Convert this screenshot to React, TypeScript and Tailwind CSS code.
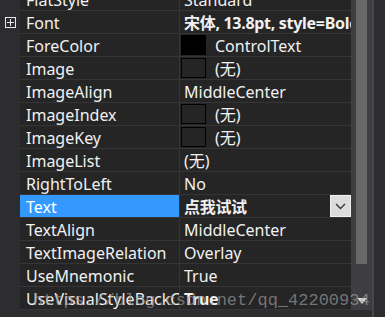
const rows: { name: string; value: string; bold?: boolean; swatch?: "black" | "empty"; expand?: boolean; selected?: boolean }[] = [
  { name: "FlatStyle", value: "Standard" },
  { name: "Font", value: "宋体, 13.8pt, style=Bold", bold: true, expand: true },
  { name: "ForeColor", value: "ControlText", swatch: "black" },
  { name: "Image", value: "(无)", swatch: "empty" },
  { name: "ImageAlign", value: "MiddleCenter" },
  { name: "ImageIndex", value: "(无)", swatch: "empty" },
  { name: "ImageKey", value: "(无)", swatch: "empty" },
  { name: "ImageList", value: "(无)" },
  { name: "RightToLeft", value: "No" },
  { name: "Text", value: "点我试试", bold: true, selected: true },
  { name: "TextAlign", value: "MiddleCenter" },
  { name: "TextImageRelation", value: "Overlay" },
  { name: "UseMnemonic", value: "True" },
  { name: "UseVisualStyleBackColor", value: "True", bold: true },
];

const PropRow = ({ row }: { row: (typeof rows)[number] }): JSX.Element => (
  <div className="flex h-[23px] flex-none">
    <div className="flex w-[20px] flex-none items-center justify-center bg-[#2d2d30]">
      {row.expand && (
        <div className="relative h-[11px] w-[11px] border border-[#e8e8e8]">
          <div className="absolute left-[1px] right-[1px] top-[4px] h-px bg-[#e8e8e8]" />
          <div className="absolute bottom-[1px] left-[4px] top-[1px] w-px bg-[#e8e8e8]" />
        </div>
      )}
    </div>
    <div
      className={`flex w-[160px] flex-none items-center overflow-hidden whitespace-nowrap border-b border-r border-[#353538] pl-[6px] pt-[2px] ${
        row.selected ? "bg-[#3399ff] text-white" : "bg-[#252526] text-[#f1f1f1]"
      }`}
    >
      {row.name}
    </div>
    <div className="flex min-w-0 flex-1 items-center overflow-hidden whitespace-nowrap border-b border-[#353538] bg-[#252526] text-[#f1f1f1]">
      {row.swatch ? (
        <>
          <div
            className={`ml-[1px] h-[20px] w-[25px] flex-none border border-black ${
              row.swatch === "black" ? "bg-black" : "bg-[#252526]"
            }`}
          />
          <span className="ml-[9px] pt-[2px]">{row.value}</span>
        </>
      ) : (
        <span className={`ml-[4px] pt-[2px] ${row.bold ? "font-bold tracking-[-0.3px]" : ""}`}>{row.value}</span>
      )}
      {row.selected && (
        <div className="ml-auto flex h-[22px] w-[21px] flex-none items-center justify-center border border-[#f0f0f0] bg-[#dcdcdc]">
          <svg width="11" height="7" viewBox="0 0 11 7">
            <path d="M1 1l4.5 4.5L10 1" fill="none" stroke="#333" strokeWidth="1.4" />
          </svg>
        </div>
      )}
    </div>
  </div>
);

export default function App() {
  return (
    <div
      className="relative flex h-[317px] w-[385px] overflow-hidden bg-[#2d2d30] text-[16px]"
      style={{ fontFamily: '"Noto Sans", "Noto Sans CJK SC", sans-serif' }}
    >
      <div className="flex w-[351px] flex-none flex-col">
        <div className="-mt-[12px] flex flex-col">
          {rows.map((r) => (
            <PropRow key={r.name} row={r} />
          ))}
        </div>
      </div>
      <div className="flex h-[310px] w-[21px] flex-none flex-col bg-[#3e3e42]">
        <div className="ml-[5px] h-[264px] w-[11px] bg-[#686868]" />
        <div className="mt-auto mb-[6px] flex justify-center">
          <svg width="10" height="6" viewBox="0 0 10 6">
            <path d="M0 0h10L5 6z" fill="#d8d8d8" />
          </svg>
        </div>
      </div>
      <div className="w-[2px] flex-none bg-[#46464b]" />
      <div className="flex-1 bg-[#2d2d30]" />
      <div
        className="pointer-events-none absolute left-[33px] top-[288px] whitespace-nowrap text-[17px] text-[#9a9a9a]/70"
        style={{ fontFamily: '"Liberation Mono", monospace' }}
      >
        https://blog.csdn.net/qq_42200934
      </div>
    </div>
  );
}
